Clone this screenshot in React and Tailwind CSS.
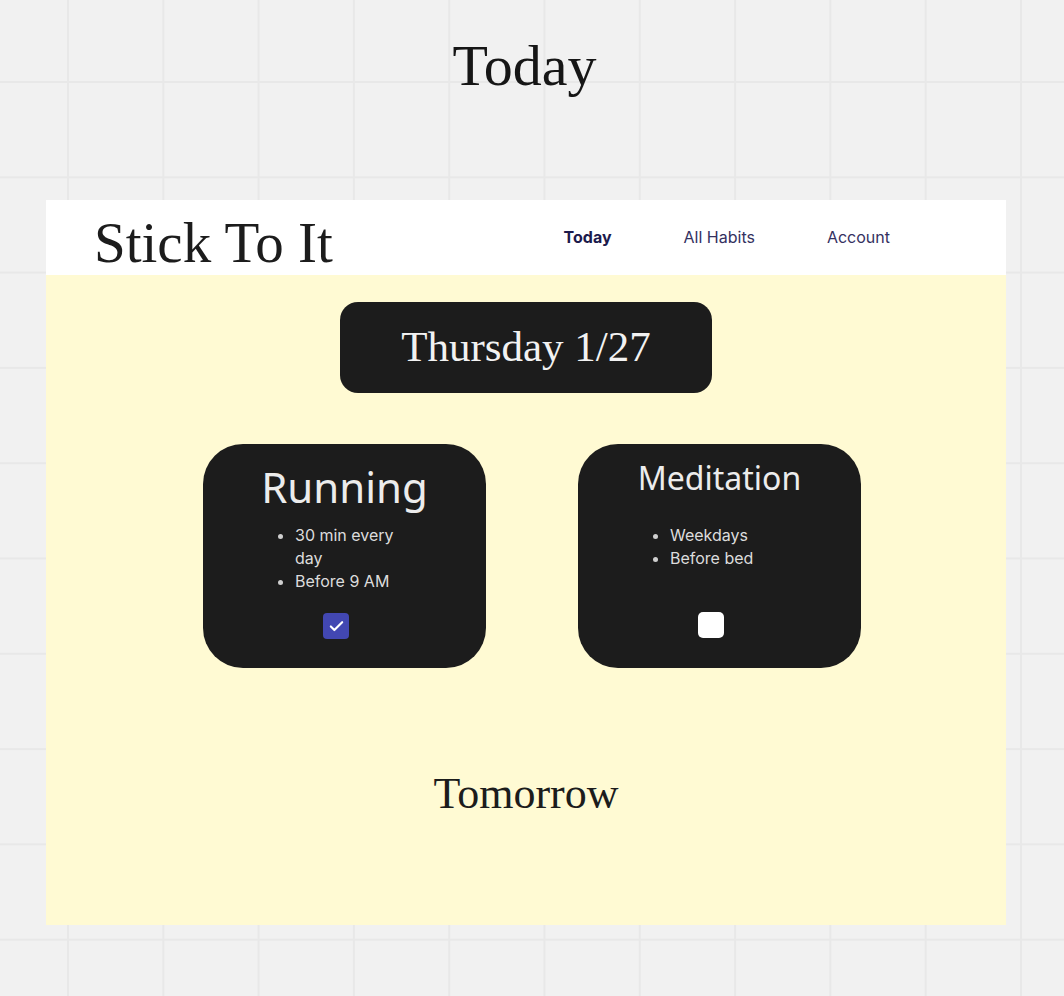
import { Check } from 'lucide-react';

const serif = "font-['Liberation_Serif','Times_New_Roman',serif]";
const sans = "font-['Noto_Sans','Inter',sans-serif]";

function HabitCard({ title, items, done, titleClass, listClass, boxClass }) {
  return (
    <div className="w-[283px] h-[224px] rounded-[40px] bg-[#1c1c1c] flex flex-col">
      <div className={`text-center text-[#ececec] ${sans} ${titleClass}`}>{title}</div>

      <ul className={`list-disc pl-[92px] pr-[60px] text-[16px] leading-[23px] text-[#dcdcdc] font-['Inter',sans-serif] marker:text-[#cfcfcf] ${listClass}`}>
        {items.map((item) => (
          <li key={item} className="w-[112px]">
            {item}
          </li>
        ))}
      </ul>

      {/* Checkbox */}
      <div className={`ml-[120px] ${boxClass}`}>
        {done ? (
          <div className="w-[26px] h-[26px] rounded-[4px] bg-[#4247b2] flex items-center justify-center">
            <Check className="w-[17px] h-[17px] text-white" strokeWidth={3} />
          </div>
        ) : (
          <div className="w-[26px] h-[26px] rounded-[5px] bg-white" />
        )}
      </div>
    </div>
  );
}

export default function App() {
  return (
    <div className="w-[1064px] h-[996px] bg-[#f1f1f1] bg-[linear-gradient(to_right,#e8e8e8_2px,transparent_2px),linear-gradient(to_bottom,#e8e8e8_2px,transparent_2px)] bg-[size:95.3px_95.3px] bg-[position:67px_81px] overflow-hidden">
      {/* Canvas label */}
      <div className={`pt-[37px] h-[200px] text-center text-[58px] leading-[58px] text-[#161616] ${serif} pr-[15px]`}>
        Today
      </div>

      {/* Frame */}
      <div className="ml-[46px] w-[960px]">
        {/* Header */}
        <div className="h-[75px] bg-white flex items-center">
          <div className={`pl-[48px] pt-[10px] text-[57px] leading-[57px] text-[#1c1c1c] ${serif}`}>
            Stick To It
          </div>
          <nav className="ml-auto mr-[116px] flex items-center gap-[72px] text-[16px] font-['Inter',sans-serif] pb-[2px]">
            <span className="font-bold text-[#1c1a4c]">Today</span>
            <span className="text-[#34315f]">All Habits</span>
            <span className="text-[#34315f]">Account</span>
          </nav>
        </div>

        {/* Body */}
        <div className="h-[650px] bg-[#fffad3] flex flex-col items-center">
          <div className={`mt-[27px] w-[372px] h-[91px] rounded-[18px] bg-[#1c1c1c] flex items-center justify-center text-[43px] text-[#f2f2f2] ${serif}`}>
            Thursday 1/27
          </div>

          <div className="mt-[51px] pl-[12px] flex gap-[92px]">
            <HabitCard
              title="Running"
              items={['30 min every day', 'Before 9 AM']}
              done
              titleClass="pt-[18px] text-[42px] leading-[50px]"
              listClass="mt-[12px]"
              boxClass="mt-[20px]"
            />
            <HabitCard
              title="Meditation"
              items={['Weekdays', 'Before bed']}
              titleClass="pt-[14px] text-[32px] leading-[40px]"
              listClass="mt-[26px]"
              boxClass="mt-[42px]"
            />
          </div>

          <div className={`mt-[104px] text-[44px] leading-[44px] text-[#1c1c1c] ${serif}`}>Tomorrow</div>
        </div>
      </div>
    </div>
  );
}
